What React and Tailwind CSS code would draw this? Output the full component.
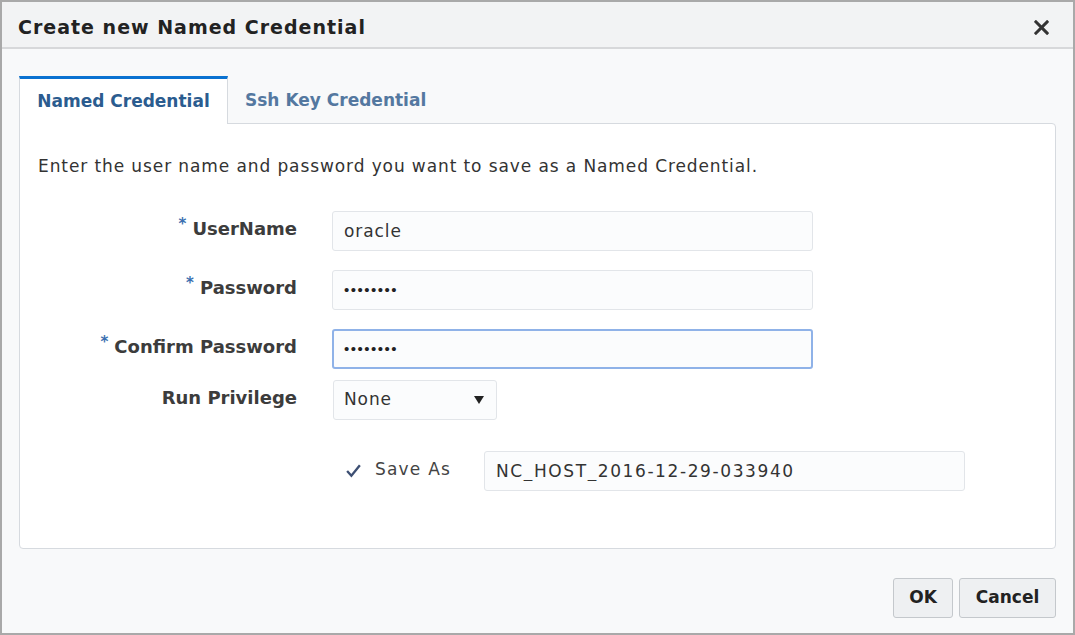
import React, { useState } from "react";

const Field = ({ label, required, children }) => (
  <div className="flex items-center">
    <div className="w-[277px] shrink-0 text-right font-bold text-[18px] text-[#3c3c3c] -mt-[5px]">
      {required && <span className="text-[#3a6fb0] text-[15px] relative -top-[6px] mr-[6px]">*</span>}
      {label}
    </div>
    <div className="pl-[35px]">{children}</div>
  </div>
);

const pwFont = { fontFamily: '"Liberation Sans", Arial, sans-serif' };

export default function App() {
  const [tab, setTab] = useState(0);

  return (
    <div
      className="w-[1075px] h-[635px] border-2 border-[#a9a9a9] bg-[#f8f9fa] flex flex-col text-[#333] overflow-hidden"
      style={{ fontFamily: '"DejaVu Sans", Verdana, sans-serif' }}
    >
      {/* Header */}
      <div className="h-[47px] shrink-0 bg-[#f2f3f4] border-b-2 border-[#d7d8da] flex items-center justify-between pl-[16px] pr-[24px]">
        <h1 className="font-bold text-[19px] tracking-[1px] text-[#222] mt-[6px]">Create new Named Credential</h1>
        <svg width="15" height="15" viewBox="0 0 16 16" className="mt-[6px]">
          <path d="M2 2 L14 14 M14 2 L2 14" stroke="#333" strokeWidth="3.2" strokeLinecap="square" />
        </svg>
      </div>

      {/* Body */}
      <div className="flex-1 flex flex-col px-[17px] pt-[26px]">
        {/* Tabs */}
        <div className="flex items-end h-[48px]">
          <button
            onClick={() => setTab(0)}
            className={`h-[48px] w-[209px] flex items-center justify-center font-bold text-[17px] border-t-[3px] border-x ${
              tab === 0
                ? "bg-white border-t-[#0a72d1] border-x-[#d6dadf] text-[#2b5c8f] relative -mb-px z-10"
                : "border-transparent text-[#5478a0]"
            }`}
          >
            Named Credential
          </button>
          <button
            onClick={() => setTab(1)}
            className={`h-[48px] px-[16px] flex items-center font-bold text-[17px] border-t-[3px] border-x ${
              tab === 1
                ? "bg-white border-t-[#0a72d1] border-x-[#d6dadf] text-[#2b5c8f] relative -mb-px z-10"
                : "border-transparent text-[#5478a0]"
            }`}
          >
            Ssh Key Credential
          </button>
        </div>

        {/* Panel */}
        <div className="h-[426px] bg-white border border-[#d6dadf] rounded-b-[4px] rounded-tr-[4px] pt-[30px]">
          <p className="pl-[18px] text-[17px] tracking-[0.9px] text-[#333]">
            Enter the user name and password you want to save as a Named Credential.
          </p>

          <div className="flex flex-col mt-[31px]">
            <Field label="UserName" required>
              <input
                defaultValue="oracle"
                className="w-[481px] h-[40px] border border-[#e2e5e9] bg-[#fbfcfd] rounded-[3px] px-[11px] text-[17px] tracking-[0.9px] text-[#333] outline-none"
              />
            </Field>
            <div className="h-[19px]" />
            <Field label="Password" required>
              <input
                type="password"
                defaultValue="oracle12"
                className="w-[481px] h-[40px] border border-[#e2e5e9] bg-[#fbfcfd] rounded-[3px] px-[11px] text-[15px] tracking-[1.5px] text-[#222] outline-none"
                style={pwFont}
              />
            </Field>
            <div className="h-[19px]" />
            <Field label="Confirm Password" required>
              <input
                type="password"
                defaultValue="oracle12"
                autoFocus
                className="w-[481px] h-[40px] border-2 border-[#8fb2e8] bg-[#fbfcfd] rounded-[3px] px-[10px] text-[15px] tracking-[1.5px] text-[#222] caret-black outline-none"
                style={pwFont}
              />
            </Field>
            <div className="h-[11px]" />
            <Field label="Run Privilege">
              <div className="ml-[1px] w-[164px] h-[40px] border border-[#e2e5e9] bg-[#fbfcfd] rounded-[3px] pl-[10px] pr-[12px] flex items-center justify-between text-[17px] tracking-[0.9px] text-[#333]">
                <span>None</span>
                <svg width="10" height="8" viewBox="0 0 10 8">
                  <path d="M0 0 H10 L5 8 Z" fill="#222" />
                </svg>
              </div>
            </Field>

            <div className="flex items-center mt-[31px] pl-[325px]">
              <svg width="17" height="15" viewBox="0 0 16 14" className="mr-[13px]">
                <path d="M2 7.5 L6 12 L14 2" stroke="#3d4f73" strokeWidth="2.2" fill="none" />
              </svg>
              <span className="w-[109px] shrink-0 text-[17px] tracking-[1.2px] text-[#444] -mt-[2px]">Save As</span>
              <input
                defaultValue="NC_HOST_2016-12-29-033940"
                className="w-[481px] h-[40px] border border-[#e2e5e9] bg-[#fbfcfd] rounded-[3px] px-[11px] text-[17px] tracking-[1.6px] text-[#333] outline-none"
              />
            </div>
          </div>
        </div>

        {/* Footer */}
        <div className="flex justify-end gap-[6px] mt-[29px]">
          <button className="w-[60px] h-[40px] border border-[#c4c8cc] bg-[#eef0f2] rounded-[3px] font-bold text-[17px] text-[#222]">
            OK
          </button>
          <button className="w-[97px] h-[40px] border border-[#c4c8cc] bg-[#eef0f2] rounded-[3px] font-bold text-[17px] text-[#222]">
            Cancel
          </button>
        </div>
      </div>
    </div>
  );
}
